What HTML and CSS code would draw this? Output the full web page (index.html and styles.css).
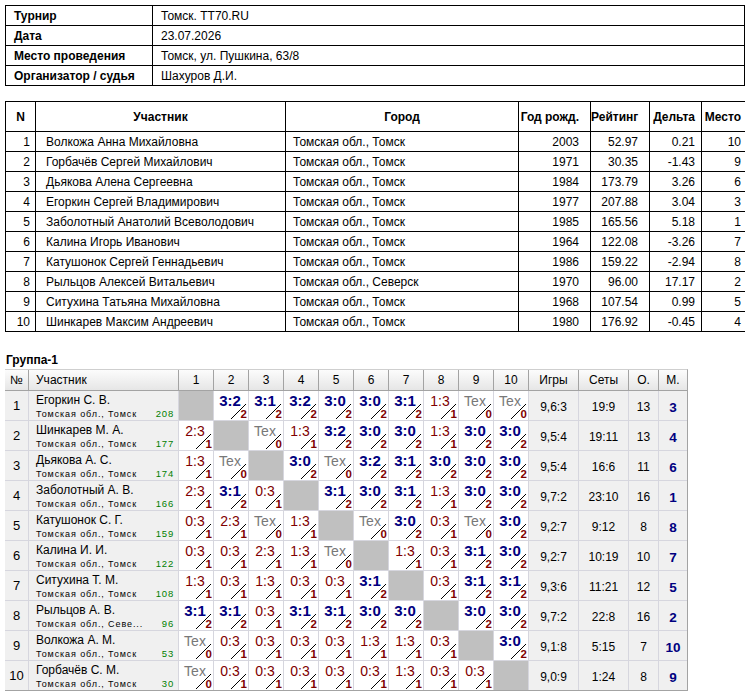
FILE: index.html
```html
<!DOCTYPE html>
<html lang="ru">
<head>
<meta charset="utf-8">
<title>Томск. TT70.RU</title>
<link rel="stylesheet" href="styles.css">
</head>
<body>
<table class="info">
  <colgroup><col class="ck"><col></colgroup>
  <tr><td class="k">Турнир</td><td>Томск. TT70.RU</td></tr>
  <tr><td class="k">Дата</td><td>23.07.2026</td></tr>
  <tr><td class="k">Место проведения</td><td>Томск, ул. Пушкина, 63/8</td></tr>
  <tr><td class="k">Организатор / судья</td><td>Шахуров Д.И.</td></tr>
</table>

<table class="plist">
  <colgroup>
    <col class="c-n"><col class="c-name"><col class="c-city"><col class="c-year"><col class="c-rt"><col class="c-dl"><col class="c-pl">
  </colgroup>
  <tr>
    <th class="n">N</th><th>Участник</th><th>Город</th><th class="yr">Год рожд.</th><th class="rt">Рейтинг</th><th class="dl">Дельта</th><th class="pl">Место</th>
  </tr>
  <tr><td class="n">1</td><td class="nm">Волкожа Анна Михайловна</td><td class="ct">Томская обл., Томск</td><td class="yr">2003</td><td class="rt">52.97</td><td class="dl">0.21</td><td class="pl">10</td></tr>
  <tr><td class="n">2</td><td class="nm">Горбачёв Сергей Михайлович</td><td class="ct">Томская обл., Томск</td><td class="yr">1971</td><td class="rt">30.35</td><td class="dl">-1.43</td><td class="pl">9</td></tr>
  <tr><td class="n">3</td><td class="nm">Дьякова Алена Сергеевна</td><td class="ct">Томская обл., Томск</td><td class="yr">1984</td><td class="rt">173.79</td><td class="dl">3.26</td><td class="pl">6</td></tr>
  <tr><td class="n">4</td><td class="nm">Егоркин Сергей Владимирович</td><td class="ct">Томская обл., Томск</td><td class="yr">1977</td><td class="rt">207.88</td><td class="dl">3.04</td><td class="pl">3</td></tr>
  <tr><td class="n">5</td><td class="nm">Заболотный Анатолий Всеволодович</td><td class="ct">Томская обл., Томск</td><td class="yr">1985</td><td class="rt">165.56</td><td class="dl">5.18</td><td class="pl">1</td></tr>
  <tr><td class="n">6</td><td class="nm">Калина Игорь Иванович</td><td class="ct">Томская обл., Томск</td><td class="yr">1964</td><td class="rt">122.08</td><td class="dl">-3.26</td><td class="pl">7</td></tr>
  <tr><td class="n">7</td><td class="nm">Катушонок Сергей Геннадьевич</td><td class="ct">Томская обл., Томск</td><td class="yr">1986</td><td class="rt">159.22</td><td class="dl">-2.94</td><td class="pl">8</td></tr>
  <tr><td class="n">8</td><td class="nm">Рыльцов Алексей Витальевич</td><td class="ct">Томская обл., Северск</td><td class="yr">1970</td><td class="rt">96.00</td><td class="dl">17.17</td><td class="pl">2</td></tr>
  <tr><td class="n">9</td><td class="nm">Ситухина Татьяна Михайловна</td><td class="ct">Томская обл., Томск</td><td class="yr">1968</td><td class="rt">107.54</td><td class="dl">0.99</td><td class="pl">5</td></tr>
  <tr><td class="n">10</td><td class="nm">Шинкарев Максим Андреевич</td><td class="ct">Томская обл., Томск</td><td class="yr">1980</td><td class="rt">176.92</td><td class="dl">-0.45</td><td class="pl">4</td></tr>
</table>

<div class="gtitle">Группа-1</div>

<div class="xt">
  <div class="xh">
    <div>№</div><div class="hp">Участник</div>
    <div>1</div><div>2</div><div>3</div><div>4</div><div>5</div><div>6</div><div>7</div><div>8</div><div>9</div><div>10</div>
    <div>Игры</div><div>Сеты</div><div>О.</div><div>М.</div>
  </div>
  <div class="xb">
    <!-- 1 -->
    <div class="no">1</div>
    <div class="pp"><div class="pn">Егоркин С. В.</div><div class="pc"><span>Томская обл., Томск</span><span class="pr">208</span></div></div>
    <div class="c x"></div>
    <div class="c w"><b>3:2</b><i>2</i></div>
    <div class="c w"><b>3:1</b><i>2</i></div>
    <div class="c w"><b>3:2</b><i>2</i></div>
    <div class="c w"><b>3:0</b><i>2</i></div>
    <div class="c w"><b>3:0</b><i>2</i></div>
    <div class="c w"><b>3:1</b><i>2</i></div>
    <div class="c l"><b>1:3</b><i>1</i></div>
    <div class="c t"><b>Tex</b><i>0</i></div>
    <div class="c t"><b>Tex</b><i>0</i></div>
    <div class="st">9,6:3</div><div class="st">19:9</div><div class="st">13</div><div class="mp">3</div>
    <!-- 2 -->
    <div class="no">2</div>
    <div class="pp"><div class="pn">Шинкарев М. А.</div><div class="pc"><span>Томская обл., Томск</span><span class="pr">177</span></div></div>
    <div class="c l"><b>2:3</b><i>1</i></div>
    <div class="c x"></div>
    <div class="c t"><b>Tex</b><i>0</i></div>
    <div class="c l"><b>1:3</b><i>1</i></div>
    <div class="c w"><b>3:2</b><i>2</i></div>
    <div class="c w"><b>3:0</b><i>2</i></div>
    <div class="c w"><b>3:0</b><i>2</i></div>
    <div class="c l"><b>1:3</b><i>1</i></div>
    <div class="c w"><b>3:0</b><i>2</i></div>
    <div class="c w"><b>3:0</b><i>2</i></div>
    <div class="st">9,5:4</div><div class="st">19:11</div><div class="st">13</div><div class="mp">4</div>
    <!-- 3 -->
    <div class="no">3</div>
    <div class="pp"><div class="pn">Дьякова А. С.</div><div class="pc"><span>Томская обл., Томск</span><span class="pr">174</span></div></div>
    <div class="c l"><b>1:3</b><i>1</i></div>
    <div class="c t"><b>Tex</b><i>0</i></div>
    <div class="c x"></div>
    <div class="c w"><b>3:0</b><i>2</i></div>
    <div class="c t"><b>Tex</b><i>0</i></div>
    <div class="c w"><b>3:2</b><i>2</i></div>
    <div class="c w"><b>3:1</b><i>2</i></div>
    <div class="c w"><b>3:0</b><i>2</i></div>
    <div class="c w"><b>3:0</b><i>2</i></div>
    <div class="c w"><b>3:0</b><i>2</i></div>
    <div class="st">9,5:4</div><div class="st">16:6</div><div class="st">11</div><div class="mp">6</div>
    <!-- 4 -->
    <div class="no">4</div>
    <div class="pp"><div class="pn">Заболотный А. В.</div><div class="pc"><span>Томская обл., Томск</span><span class="pr">166</span></div></div>
    <div class="c l"><b>2:3</b><i>1</i></div>
    <div class="c w"><b>3:1</b><i>2</i></div>
    <div class="c l"><b>0:3</b><i>1</i></div>
    <div class="c x"></div>
    <div class="c w"><b>3:1</b><i>2</i></div>
    <div class="c w"><b>3:0</b><i>2</i></div>
    <div class="c w"><b>3:1</b><i>2</i></div>
    <div class="c l"><b>1:3</b><i>1</i></div>
    <div class="c w"><b>3:0</b><i>2</i></div>
    <div class="c w"><b>3:0</b><i>2</i></div>
    <div class="st">9,7:2</div><div class="st">23:10</div><div class="st">16</div><div class="mp">1</div>
    <!-- 5 -->
    <div class="no">5</div>
    <div class="pp"><div class="pn">Катушонок С. Г.</div><div class="pc"><span>Томская обл., Томск</span><span class="pr">159</span></div></div>
    <div class="c l"><b>0:3</b><i>1</i></div>
    <div class="c l"><b>2:3</b><i>1</i></div>
    <div class="c t"><b>Tex</b><i>0</i></div>
    <div class="c l"><b>1:3</b><i>1</i></div>
    <div class="c x"></div>
    <div class="c t"><b>Tex</b><i>0</i></div>
    <div class="c w"><b>3:0</b><i>2</i></div>
    <div class="c l"><b>0:3</b><i>1</i></div>
    <div class="c t"><b>Tex</b><i>0</i></div>
    <div class="c w"><b>3:0</b><i>2</i></div>
    <div class="st">9,2:7</div><div class="st">9:12</div><div class="st">8</div><div class="mp">8</div>
    <!-- 6 -->
    <div class="no">6</div>
    <div class="pp"><div class="pn">Калина И. И.</div><div class="pc"><span>Томская обл., Томск</span><span class="pr">122</span></div></div>
    <div class="c l"><b>0:3</b><i>1</i></div>
    <div class="c l"><b>0:3</b><i>1</i></div>
    <div class="c l"><b>2:3</b><i>1</i></div>
    <div class="c l"><b>1:3</b><i>1</i></div>
    <div class="c t"><b>Tex</b><i>0</i></div>
    <div class="c x"></div>
    <div class="c l"><b>1:3</b><i>1</i></div>
    <div class="c l"><b>0:3</b><i>1</i></div>
    <div class="c w"><b>3:1</b><i>2</i></div>
    <div class="c w"><b>3:0</b><i>2</i></div>
    <div class="st">9,2:7</div><div class="st">10:19</div><div class="st">10</div><div class="mp">7</div>
    <!-- 7 -->
    <div class="no">7</div>
    <div class="pp"><div class="pn">Ситухина Т. М.</div><div class="pc"><span>Томская обл., Томск</span><span class="pr">108</span></div></div>
    <div class="c l"><b>1:3</b><i>1</i></div>
    <div class="c l"><b>0:3</b><i>1</i></div>
    <div class="c l"><b>1:3</b><i>1</i></div>
    <div class="c l"><b>0:3</b><i>1</i></div>
    <div class="c l"><b>0:3</b><i>1</i></div>
    <div class="c w"><b>3:1</b><i>2</i></div>
    <div class="c x"></div>
    <div class="c l"><b>0:3</b><i>1</i></div>
    <div class="c w"><b>3:1</b><i>2</i></div>
    <div class="c w"><b>3:1</b><i>2</i></div>
    <div class="st">9,3:6</div><div class="st">11:21</div><div class="st">12</div><div class="mp">5</div>
    <!-- 8 -->
    <div class="no">8</div>
    <div class="pp"><div class="pn">Рыльцов А. В.</div><div class="pc"><span>Томская обл., Севе...</span><span class="pr">96</span></div></div>
    <div class="c w"><b>3:1</b><i>2</i></div>
    <div class="c w"><b>3:1</b><i>2</i></div>
    <div class="c l"><b>0:3</b><i>1</i></div>
    <div class="c w"><b>3:1</b><i>2</i></div>
    <div class="c w"><b>3:1</b><i>2</i></div>
    <div class="c w"><b>3:0</b><i>2</i></div>
    <div class="c w"><b>3:0</b><i>2</i></div>
    <div class="c x"></div>
    <div class="c w"><b>3:0</b><i>2</i></div>
    <div class="c w"><b>3:0</b><i>2</i></div>
    <div class="st">9,7:2</div><div class="st">22:8</div><div class="st">16</div><div class="mp">2</div>
    <!-- 9 -->
    <div class="no">9</div>
    <div class="pp"><div class="pn">Волкожа А. М.</div><div class="pc"><span>Томская обл., Томск</span><span class="pr">53</span></div></div>
    <div class="c t"><b>Tex</b><i>0</i></div>
    <div class="c l"><b>0:3</b><i>1</i></div>
    <div class="c l"><b>0:3</b><i>1</i></div>
    <div class="c l"><b>0:3</b><i>1</i></div>
    <div class="c l"><b>0:3</b><i>1</i></div>
    <div class="c l"><b>1:3</b><i>1</i></div>
    <div class="c l"><b>1:3</b><i>1</i></div>
    <div class="c l"><b>0:3</b><i>1</i></div>
    <div class="c x"></div>
    <div class="c w"><b>3:0</b><i>2</i></div>
    <div class="st">9,1:8</div><div class="st">5:15</div><div class="st">7</div><div class="mp">10</div>
    <!-- 10 -->
    <div class="no">10</div>
    <div class="pp"><div class="pn">Горбачёв С. М.</div><div class="pc"><span>Томская обл., Томск</span><span class="pr">30</span></div></div>
    <div class="c t"><b>Tex</b><i>0</i></div>
    <div class="c l"><b>0:3</b><i>1</i></div>
    <div class="c l"><b>0:3</b><i>1</i></div>
    <div class="c l"><b>0:3</b><i>1</i></div>
    <div class="c l"><b>0:3</b><i>1</i></div>
    <div class="c l"><b>0:3</b><i>1</i></div>
    <div class="c l"><b>1:3</b><i>1</i></div>
    <div class="c l"><b>0:3</b><i>1</i></div>
    <div class="c l"><b>0:3</b><i>1</i></div>
    <div class="c x"></div>
    <div class="st">9,0:9</div><div class="st">1:24</div><div class="st">8</div><div class="mp">9</div>
  </div>
</div>
</body>
</html>
```

FILE: styles.css
```css
html, body {
  background: #fff;
}
body {
  margin: 5px;
  font-family: "Liberation Sans", Arial, sans-serif;
  font-size: 12px;
  color: #000;
}
table {
  border-collapse: collapse;
  table-layout: fixed;
}

/* tournament info */
.info {
  width: 740px;
}
.info .ck {
  width: 147px;
}
.info td {
  border: 1px solid #000;
  height: 19px;
  padding: 0 8px;
  line-height: 14px;
  white-space: nowrap;
}
.info td.k {
  font-weight: bold;
}

/* participants list */
.plist {
  width: 740px;
  margin-top: 15px;
}
.plist .c-n { width: 30px; }
.plist .c-name { width: 250px; }
.plist .c-city { width: 233px; }
.plist .c-year { width: 72px; }
.plist .c-rt { width: 59px; }
.plist .c-dl { width: 52px; }
.plist .c-pl { width: 44px; }
.plist th,
.plist td {
  border: 1px solid #000;
  padding: 0;
  line-height: 14px;
  white-space: nowrap;
}
.plist th {
  height: 29px;
  font-weight: bold;
  text-align: center;
}
.plist td {
  height: 19px;
}
.plist td.n { text-align: right; padding-right: 5px; }
.plist th.n { text-align: center; }
.plist .nm { padding-left: 10px; }
.plist .ct { padding-left: 7px; }
.plist .yr { text-align: right; padding-right: 11px; }
.plist .rt { text-align: right; padding-right: 11px; }
.plist .dl { text-align: right; padding-right: 6px; }
.plist .pl { text-align: right; padding-right: 4px; }

/* group title */
.gtitle {
  font-weight: bold;
  line-height: 14px;
  margin: 21px 0 2px 1px;
}

/* cross table */
.xt {
  width: 684px;
  margin-left: -1px;
}
.xh,
.xb {
  display: grid;
  grid-template-columns: 23px 149px repeat(10, 34px) 49px 49px 29px 28px;
  column-gap: 1px;
}
.xh {
  background: #a3a3a3;
  border: 1px solid #a3a3a3;
  border-top-color: #cfcfcf;
}
.xh > div {
  height: 20px;
  line-height: 20px;
  text-align: center;
  background: linear-gradient(#fcfcfc, #e6e6e6);
}
.xh > .hp {
  text-align: left;
  padding-left: 7px;
}
.xb {
  background: #d6d6de;
  row-gap: 1px;
  grid-auto-rows: 29px;
  border: 1px solid #a3a3a3;
  border-top: 0;
}
.no {
  background: #f0f0f0;
  display: flex;
  align-items: center;
  justify-content: center;
  font-size: 13px;
}
.pp {
  background: #f0f0f0;
  padding: 2px 4px 0 7px;
}
.pn {
  line-height: 14px;
  white-space: nowrap;
}
.pc {
  display: flex;
  justify-content: space-between;
  align-items: baseline;
  margin-top: 1px;
  font-size: 9px;
  line-height: 11px;
  letter-spacing: 0.9px;
  white-space: nowrap;
}
.pr {
  color: #008000;
  font-size: 9.5px;
  letter-spacing: 0.8px;
}
.c {
  display: flex;
  flex-direction: column;
  background: linear-gradient(to bottom right,
      transparent calc(50% - 0.7px), #000 calc(50% - 0.7px),
      #000 calc(50% + 0.7px), transparent calc(50% + 0.7px))
    right 2px bottom 1px / 15px 15px no-repeat #fff;
}
.c b {
  display: block;
  height: 16px;
  padding: 2px 2px 0 0;
  line-height: 16px;
  text-align: center;
  font-size: 14px;
  font-weight: normal;
  white-space: nowrap;
}
.w b {
  font-size: 15px;
  font-weight: bold;
  color: #000080;
}
.l b {
  color: #800000;
}
.t b {
  color: #787878;
}
.c i {
  display: block;
  margin-top: auto;
  height: 11px;
  line-height: 11px;
  padding-right: 1px;
  text-align: right;
  font-style: normal;
  font-weight: bold;
  font-size: 11.5px;
  color: #800000;
}
.c.x {
  background: #c0c0c0;
}
.st,
.mp {
  background: #f0f0f0;
  display: flex;
  align-items: center;
  justify-content: center;
  padding-top: 3px;
}
.mp {
  font-weight: bold;
  font-size: 13.5px;
  color: #000080;
}
```
